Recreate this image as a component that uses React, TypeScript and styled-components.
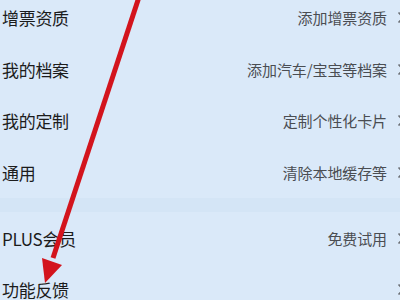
import React from 'react'
import styled, { createGlobalStyle } from 'styled-components'

const GlobalStyle = createGlobalStyle`
  html, body {
    margin: 0;
    padding: 0;
    background: #dae9f9;
    overflow: hidden;
  }
  body {
    font-family: "Noto Sans CJK SC", "Noto Sans", sans-serif;
  }
`

const Page = styled.div`
  position: relative;
  width: 400px;
  height: 300px;
  overflow: hidden;
  background: #dae9f9;
`

const List = styled.div`
  display: flex;
  flex-direction: column;
  margin-top: -8px;
  width: 400px;
`

const Row = styled.div`
  display: flex;
  align-items: center;
  height: 51.6px;
  padding-left: 2px;
`

const Band = styled.div`
  height: 14px;
  background: #d4e5f6;
`

const Label = styled.div`
  flex: 1;
  font-size: 17px;
  color: #1c1c1c;
  letter-spacing: -0.3px;
`

const Hint = styled.div`
  font-size: 15px;
  color: #4a4d52;
  letter-spacing: -0.1px;
`

const Chevron = styled.svg`
  width: 8px;
  height: 13px;
  margin-left: 10px;
  margin-right: -5px;
  flex: none;
`

const Arrow = styled.svg`
  position: absolute;
  left: 0;
  top: 0;
  width: 400px;
  height: 300px;
  pointer-events: none;
`

interface ItemProps {
  label: string
  hint?: string
}

function Item({ label, hint }: ItemProps) {
  return (
    <Row>
      <Label>{label}</Label>
      {hint && <Hint>{hint}</Hint>}
      <Chevron viewBox="0 0 8 13">
        <path d="M1.5 1.5 L6.5 6.5 L1.5 11.5" fill="none" stroke="#6d7177" strokeWidth="1.6" />
      </Chevron>
    </Row>
  )
}

const TOP: ItemProps[] = [
  { label: '增票资质', hint: '添加增票资质' },
  { label: '我的档案', hint: '添加汽车/宝宝等档案' },
  { label: '我的定制', hint: '定制个性化卡片' },
  { label: '通用', hint: '清除本地缓存等' },
]

const BOTTOM: ItemProps[] = [
  { label: 'PLUS会员', hint: '免费试用' },
  { label: '功能反馈' },
]

export default function App() {
  return (
    <Page>
      <GlobalStyle />
      <List>
        {TOP.map(i => <Item key={i.label} {...i} />)}
        <Band />
        {BOTTOM.map(i => <Item key={i.label} {...i} />)}
      </List>
      <Arrow viewBox="0 0 400 300">
        <line x1="140" y1="-6" x2="53" y2="258" stroke="#d3141d" strokeWidth="5" />
        <polygon points="42,258 62,265 45,283" fill="#d3141d" />
      </Arrow>
    </Page>
  )
}
